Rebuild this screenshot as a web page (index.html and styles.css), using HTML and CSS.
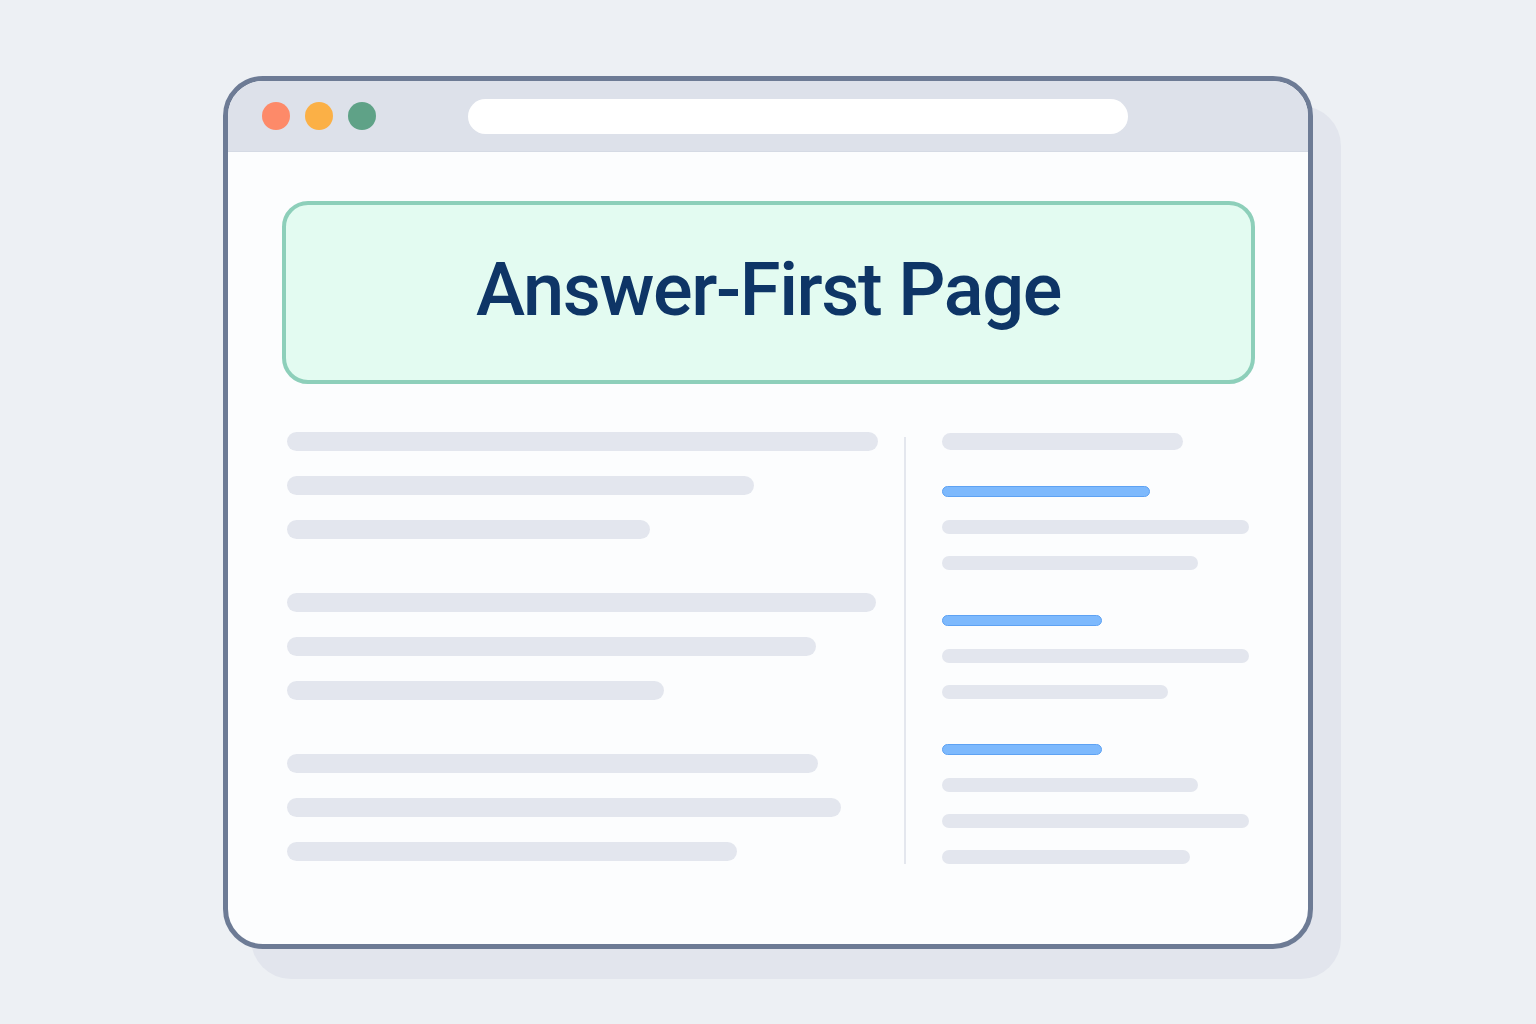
FILE: index.html
```html
<!DOCTYPE html>
<html>
	<head>
		<meta charset="utf-8" />
		<title>Answer-First Page</title>
		<link rel="stylesheet" href="styles.css">
	</head>

	<body>
		<div class="window">
			<div class="titlebar">
				<span class="dot red"></span>
				<span class="dot yellow"></span>
				<span class="dot green"></span>
				<div class="address"></div>
			</div>
			<div class="content">
				<div class="banner">
					<h1>Answer-First Page</h1>
				</div>
				<div class="columns">
					<div class="main">
						<div class="group">
							<div class="bar" style="width: 591px"></div>
							<div class="bar" style="width: 467px"></div>
							<div class="bar" style="width: 363px"></div>
						</div>
						<div class="group">
							<div class="bar" style="width: 589px"></div>
							<div class="bar" style="width: 529px"></div>
							<div class="bar" style="width: 377px"></div>
						</div>
						<div class="group">
							<div class="bar" style="width: 531px"></div>
							<div class="bar" style="width: 554px"></div>
							<div class="bar" style="width: 450px"></div>
						</div>
					</div>
					<div class="divider"></div>
					<div class="side">
						<div class="side-title" style="width: 241px"></div>
						<div class="side-group">
							<div class="link" style="width: 208px"></div>
							<div class="line" style="width: 307px"></div>
							<div class="line" style="width: 256px"></div>
						</div>
						<div class="side-group">
							<div class="link" style="width: 160px"></div>
							<div class="line" style="width: 307px"></div>
							<div class="line" style="width: 226px"></div>
						</div>
						<div class="side-group">
							<div class="link" style="width: 160px"></div>
							<div class="line" style="width: 256px"></div>
							<div class="line" style="width: 307px"></div>
							<div class="line" style="width: 248px"></div>
						</div>
					</div>
				</div>
			</div>
		</div>
	</body>

</html>
```

FILE: styles.css
```css
html {
	background: #edf0f4;
}

body {
	margin: 0;
	padding: 76px 0 75px;
	min-height: 100vh;
	box-sizing: border-box;
	font-family: Roboto, "Noto Sans", sans-serif;
}

.window {
	box-sizing: border-box;
	width: 1090px;
	height: 873px;
	margin: 0 auto;
	border: 5px solid #6d7b95;
	border-radius: 40px;
	background: #fcfdfe;
	overflow: hidden;
	box-shadow: 28px 30px 0 #e2e5ed;
}

.titlebar {
	display: flex;
	align-items: center;
	height: 70px;
	padding-left: 34px;
	background: #dde1ea;
	border-bottom: 1px solid #d5dae4;
}

.dot {
	width: 28px;
	height: 28px;
	border-radius: 50%;
	margin-right: 15px;
}

.red {
	background: #fd8a69;
}

.yellow {
	background: #fbb046;
}

.green {
	background: #5fa287;
}

.address {
	width: 660px;
	height: 35px;
	margin-left: 77px;
	border-radius: 18px;
	background: #fff;
}

.content {
	padding: 49px 53px 0 54px;
}

.banner {
	box-sizing: border-box;
	height: 183px;
	display: flex;
	align-items: center;
	justify-content: center;
	border: 4px solid #8dcfba;
	border-radius: 26px;
	background: #e3fbf1;
}

.banner h1 {
	margin: 0 0 6px;
	font-size: 74px;
	font-weight: 500;
	color: #0e3566;
	letter-spacing: -1.4px;
}

.columns {
	display: flex;
	margin-top: 48px;
	padding-left: 5px;
}

.main {
	width: 591px;
}

.group + .group {
	margin-top: 54px;
}

.bar {
	height: 19px;
	border-radius: 10px;
	background: #e3e6ee;
}

.bar + .bar {
	margin-top: 25px;
}

.divider {
	width: 2px;
	margin: 5px 36px 0 26px;
	background: #e4e7ee;
}

.side {
	padding-top: 1px;
}

.side-title {
	height: 17px;
	border-radius: 9px;
	background: #e3e6ee;
	margin-bottom: 36px;
}

.side-group + .side-group {
	margin-top: 45px;
}

.link {
	box-sizing: border-box;
	height: 11px;
	border-radius: 6px;
	background: #7db9fd;
	border: 1px solid #5ea2f3;
	margin-bottom: 23px;
}

.line {
	height: 14px;
	border-radius: 7px;
	background: #e3e6ee;
}

.line + .line {
	margin-top: 22px;
}
```
